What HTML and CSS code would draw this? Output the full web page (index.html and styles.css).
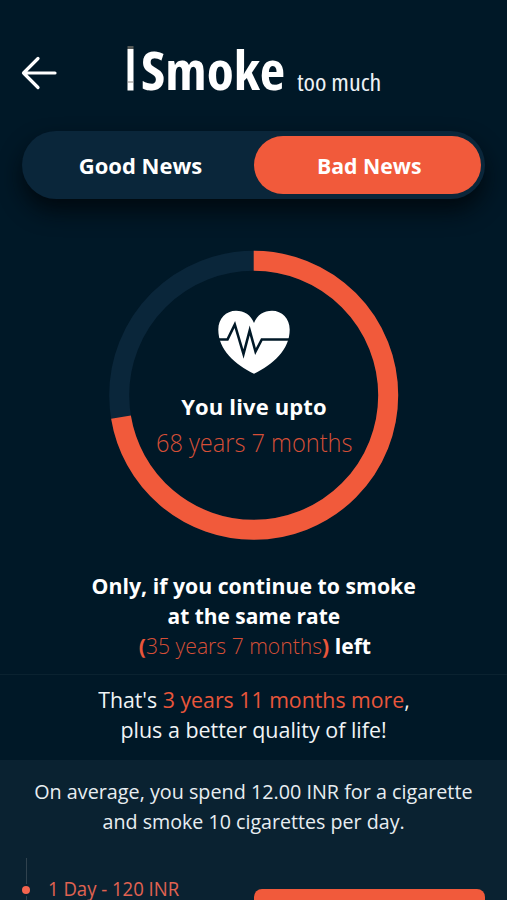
FILE: index.html
```html
<!DOCTYPE html>
<html lang="en">
<head>
<meta charset="utf-8">
<title>Smoke too much</title>
<link rel="stylesheet" href="styles.css">
</head>
<body>
<main class="screen">
  <header class="header">
    <svg class="back" width="36" height="34" viewBox="0 0 36 34" aria-label="Back"><path d="M34 17H2.500M17 2.500 2.500 17 17 31.500" fill="none" stroke="#fff" stroke-width="3.200" stroke-linecap="round" stroke-linejoin="round"/></svg>
    <svg class="cigarette" width="7" height="45" viewBox="0 0 7 45" aria-hidden="true"><path fill="#fff" d="M.5 3h6v41.500h-6z"/><path fill="#555957" d="M.5 0h6v3h-6z"/><path fill="#8b8782" d="M.5 35.500h6v1h-6z"/></svg>
    <h1 class="brand"><span class="brand-name">Smoke</span></h1>
    <span class="brand-sub">too much</span>
  </header>
  <nav class="tabs">
    <a class="tab"><span class="t-good">Good News</span></a>
    <a class="tab active"><span class="t-bad">Bad News</span></a>
  </nav>
  <section class="gauge">
    <svg class="ring" viewBox="0 0 290 290" aria-hidden="true">
      <circle cx="144.700" cy="145.300" r="134.500" fill="none" stroke="#0a263a" stroke-width="20"/>
      <circle cx="144.700" cy="145.300" r="134.500" fill="none" stroke="#f15a3b" stroke-width="20" pathLength="1000" stroke-dasharray="724 276" transform="rotate(-90 144.700 145.300)"/>
    </svg>
    <div class="gauge-content">
      <svg class="heart" width="72" height="64" viewBox="0 0 72 64" aria-hidden="true">
        <path fill="#fff" d="M36 13C33 5 26 .8 18 .8 8 .8 .3 8.500 .3 19.500 .3 40 17 54.500 36 63.800 55 54.500 71.700 40 71.700 19.500 71.700 8.500 64 .8 54 .8 46 .8 39 5 36 13z"/>
        <path fill="none" stroke="#001827" stroke-width="2.600" d="M0 29.500h9.500L16.800 14.500 25.500 44 31.700 20.500 37.500 41.500 43.800 29.500H72"/>
      </svg>
      <p class="live"><span class="t-live">You live upto</span></p>
      <p class="age"><span class="t-age">68 years 7 months</span></p>
    </div>
  </section>
  <section class="condition">
    <p><span class="t-only">Only, if you continue to smoke</span></p>
    <p><span class="t-rate">at the same rate</span></p>
    <p><span class="t-left"><span class="accent">(</span><span class="light">35 years 7 months</span><span class="accent">)</span> left</span></p>
  </section>
  <section class="bonus">
    <p><span class="t-more">That's <span class="accent">3 years 11 months more</span>,</span></p>
    <p><span class="t-plus">plus a better quality of life!</span></p>
  </section>
  <section class="spend">
    <p><span class="t-avg">On average, you spend 12.00 INR for a cigarette</span></p>
    <p><span class="t-day">and smoke 10 cigarettes per day.</span></p>
    <div class="timeline">
      <div class="rail"><i class="line"></i><i class="dot"></i><i class="line"></i></div>
      <span class="entry"><span class="t-entry">1 Day - 120 INR</span></span>
      <div class="card"></div>
    </div>
  </section>
</main>
</body>
</html>
```
FILE: styles.css
```css
* { box-sizing: border-box; }
html, body { margin: 0; height: 900px; overflow: hidden; }
body { background: #001827; color: #fff; font: 22px/30px "Open Sans", "Noto Sans", sans-serif; }
p, h1 { margin: 0; }
p { white-space: nowrap; }
.screen { width: 507px; height: 900px; overflow: hidden; display: flex; flex-direction: column; }
.header { height: 131px; flex: none; display: flex; align-items: flex-start; padding-left: 21px; white-space: nowrap; }
.back { margin-top: 56px; flex: none; }
.cigarette { margin: 46px 0 0 70px; flex: none; }
.brand { width: 156px; height: 60px; margin: 40px 0 0 7px; font-size: 53px; line-height: 60px; font-weight: 700; font-stretch: 75%; }
.brand-sub { margin-top: 67px; font-size: 24px; line-height: 30px; font-stretch: 75%; transform: scaleX(1.085); transform-origin: left; color: #eef2f6; }
.brand-name { display: inline-block; transform: scaleX(1.045); transform-origin: left; }
.tabs { width: 463px; height: 68px; flex: none; margin-left: 22px; padding: 5px 4px 5px 5px; display: grid; grid-template-columns: 1fr 227px; border-radius: 34px; background: #0a263a; box-shadow: 0 12px 22px rgba(0, 7, 12, .85); }
.tab { display: flex; align-items: center; justify-content: center; border-radius: 30px; font-weight: 700; }
.tab.active { background: #f15a3b; padding-left: 3px; }
.gauge { width: 290px; height: 290px; flex: none; margin: 51px 0 0 109px; display: grid; }
.ring, .gauge-content { grid-area: 1 / 1; }
.ring { width: 290px; height: 290px; }
.gauge-content { display: flex; flex-direction: column; align-items: center; padding-top: 60px; }
.heart { display: block; margin-bottom: 17px; }
.live { font-weight: 700; letter-spacing: .15px; }
.age { margin-top: 6px; font-size: 25px; font-weight: 300; color: #d64f37; }
.condition { flex: none; height: 134px; padding-top: 30px; text-align: center; font-weight: 700; }
.light { font-weight: 300; color: #d64f37; }
.accent { color: #e9563b; }
[class^="t-"] { display: inline-block; }
.t-bad { transform: scaleX(.965); }
.t-age { transform: scaleX(.943); }
.t-only { transform: scaleX(.967); }
.t-rate { transform: scaleX(.95); }
.t-left { transform: translateX(1px) scaleX(.96); }
.t-more { transform: scaleX(.968); }
.t-plus { transform: scaleX(.975); }
.t-avg { transform: scaleX(.964); }
.t-day { transform: scaleX(.958); }
.t-entry { transform: scaleX(.95); transform-origin: left; }
.bonus { flex: none; height: 86px; padding-top: 9px; text-align: center; border-top: 1px solid #0a2230; color: #f0f4f6; }
.spend { flex: none; height: 140px; padding-top: 16px; background: #0a2231; text-align: center; color: #e8eef1; font-size: 20.5px; }
.timeline { height: 66px; margin-top: 22px; padding-left: 21px; display: flex; }
.rail { width: 10px; display: flex; flex-direction: column; align-items: center; }
.line { width: 1px; height: 26px; background: #30424e; flex: none; }
.dot { width: 8px; height: 8px; margin: 2px 0; border-radius: 50%; background: #f5654f; flex: none; }
.entry { width: 206px; margin: 16px 0 0 17px; text-align: left; font-size: 19.5px; color: #e16351; white-space: nowrap; }
.card { width: 231px; height: 60px; margin-top: 31px; border-radius: 8px; background: #f15a3b; }
```
